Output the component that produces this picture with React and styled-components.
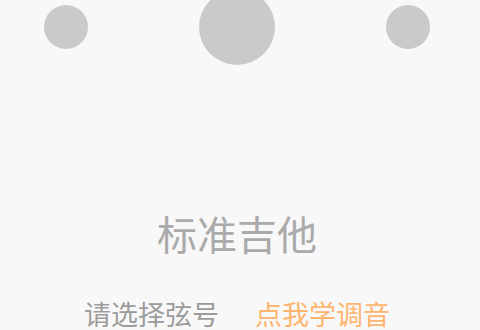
import React from "react";
import styled, { createGlobalStyle } from "styled-components";

const Global = createGlobalStyle`
  html, body { margin: 0; padding: 0; background: #f8f8f8; overflow: hidden; }
  body { font-family: "Noto Sans CJK SC", "Noto Sans", sans-serif; }
`;

const Screen = styled.div`
  width: 474px;
  height: 330px;
  display: flex;
  flex-direction: column;
  align-items: center;
  background: #f8f8f8;
`;

const PegRow = styled.div`
  width: 100%;
  box-sizing: border-box;
  height: 54px;
  padding: 0 44px;
  display: flex;
  align-items: center;
  justify-content: space-between;
`;

const Peg = styled.div`
  flex: none;
  width: ${(p) => (p.$active ? 76 : 44)}px;
  height: ${(p) => (p.$active ? 76 : 44)}px;
  border-radius: 50%;
  background: #cacaca;
`;

const Title = styled.div`
  margin-top: 159px;
  font-size: 40px;
  line-height: 40px;
  color: #aaaaaa;
`;

const ActionRow = styled.div`
  margin-top: 47px;
  display: flex;
  gap: 36px;
  font-size: 27px;
  line-height: 27px;
  white-space: nowrap;
`;

const Action = styled.div`
  color: ${(p) => (p.$accent ? "#ffb56f" : "#9c9c9c")};
`;

export default function App() {
  return (
    <>
      <Global />
      <Screen>
        <PegRow>
          <Peg />
          <Peg $active />
          <Peg />
        </PegRow>
        <Title>标准吉他</Title>
        <ActionRow>
          <Action>请选择弦号</Action>
          <Action $accent>点我学调音</Action>
        </ActionRow>
      </Screen>
    </>
  );
}
